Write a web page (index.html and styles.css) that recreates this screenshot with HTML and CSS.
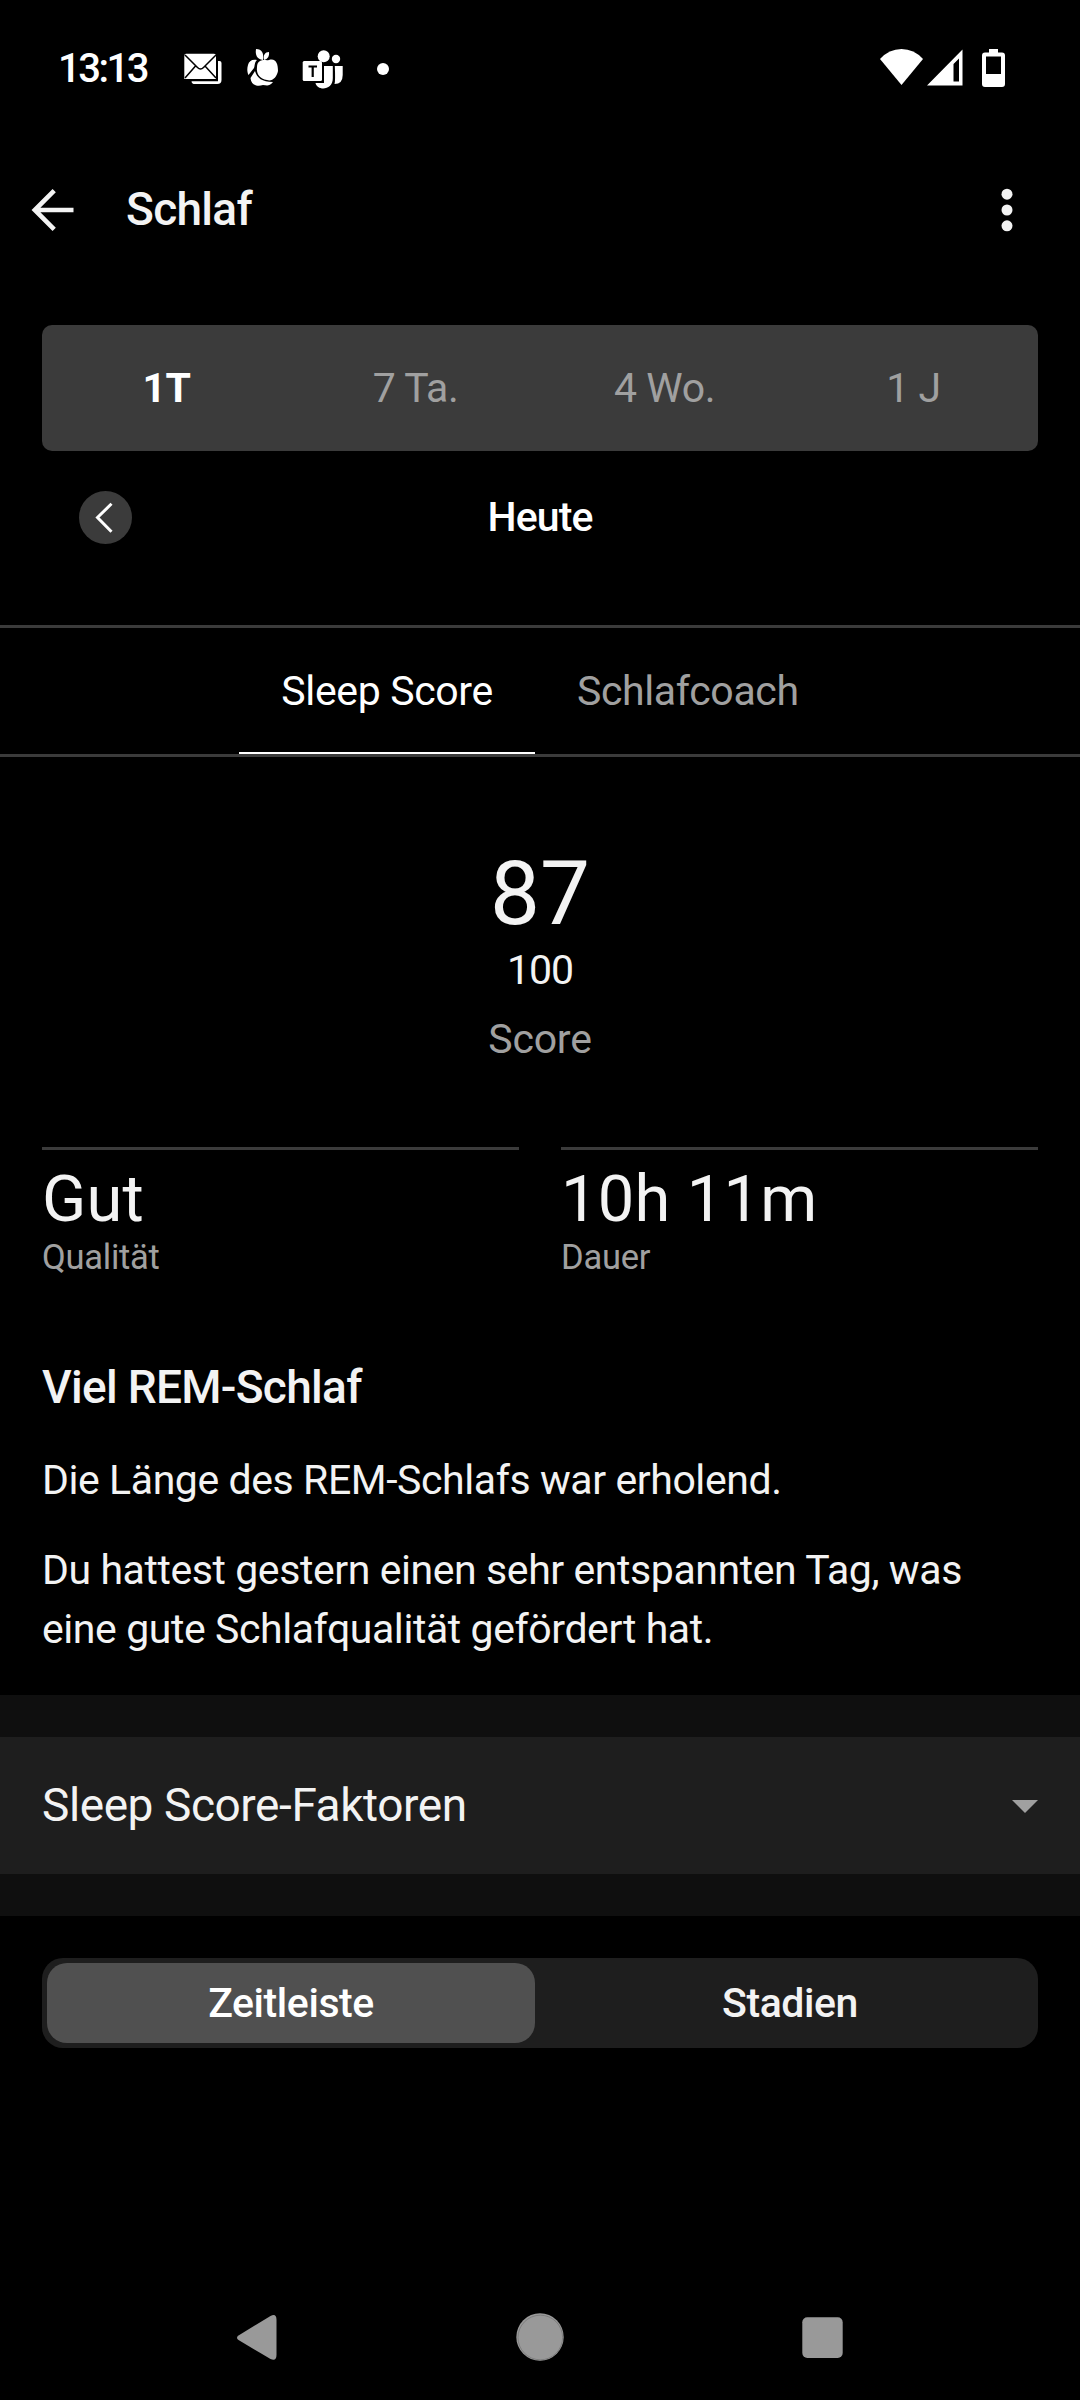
FILE: index.html
```html
<!DOCTYPE html>
<html lang="de">
<head>
<meta charset="utf-8">
<title>Schlaf</title>
<link rel="stylesheet" href="styles.css">
</head>
<body>
<div class="screen">
  <header class="status">
    <span class="clock">13:13</span>
    <svg class="notifications" width="210" height="50" viewBox="0 0 210 50" fill="#fff">
      <!-- mail -->
      <path d="M6 9.700H34Q36 9.700 36 12V35H4.300V12Q4.300 9.700 6 9.700Z"/>
      <path d="M5 11L17.500 23.500Q20.500 26.500 23.500 23.500L36 11M5 34L15.500 22M36 34L25 22" fill="none" stroke="#000" stroke-width="1.500"/>
      <path d="M38 17H39.500Q41.500 17 41.500 19V36Q41.500 40 37.500 40H13.500Q11.500 40 11.500 37.300H38Z"/>
      <!-- fruit -->
      <path d="M76 5C82 5 84 9 83 16C77 15 75 11 76 5ZM84 16C83 11 85 8 89 8C89.500 12 88 15 84 16Z"/>
      <path d="M80 17C84 15 86 17 89 16C96 14 98 20 98 27C97 33 92 38 87 36C80 35 76 30 77 23C77 20 78 18 80 17Z"/>
      <path d="M68 21C69 17 72 15 77 16C74 19 75 22 74 24L68.500 31C67 28 67 24 68 21Z"/>
      <path d="M75 27C77 34 82 38 93 38C89 43 86 41 83 41C77 43 71 41 70.500 34Z"/>
      <!-- teams -->
      <circle cx="143.700" cy="12.200" r="6"/><circle cx="156" cy="15" r="4.200"/>
      <path d="M144 22H152.800V34C153 47 137 47 135.500 39H144Z"/>
      <path d="M154.800 22H162.700V31Q162.700 40 154.500 40Q155.500 37 154.800 22Z"/>
      <rect x="122.700" y="17" width="19.300" height="20" rx="1.500"/>
      <path d="M128.500 22.500H137M132.700 22.500V33" stroke="#000" stroke-width="2.200"/>
      <circle cx="203" cy="25" r="6"/>
    </svg>
    <svg class="signals" width="130" height="42" viewBox="0 0 130 42" fill="#fff">
      <path d="M0 11Q9 1 21.500 1T43 11L21.500 37Z"/>
      <path fill-rule="evenodd" d="M82.500 1.500V37.500H47ZM79 10.500L73.500 16V33.500H79Z"/>
      <path fill-rule="evenodd" d="M109 1H118V4.500H122Q125 4.500 125 7.500V36Q125 39 122 39H105Q102 39 102 36V7.500Q102 4.500 105 4.500H109ZM106 8.500V26H121V8.500Z"/>
    </svg>
  </header>

  <div class="appbar">
    <svg width="44" height="44" viewBox="0 0 44 44" fill="none" stroke="#f3f3f3" stroke-width="4.600"><path d="M43.500 22H5M24.200 2.600L4.800 22L24.200 41.400"/></svg>
    <h1 class="title">Schlaf</h1>
    <svg class="more" width="12" height="44" viewBox="0 0 12 44" fill="#f3f3f3"><circle cx="6" cy="6.200" r="5.500"/><circle cx="6" cy="22" r="5.500"/><circle cx="6" cy="37.800" r="5.500"/></svg>
  </div>

  <nav class="periods">
    <span class="period active">1T</span><span class="period">7 Ta.</span><span class="period">4 Wo.</span><span class="period">1 J</span>
  </nav>

  <div class="day">
    <svg width="53" height="53" viewBox="0 0 53 53"><circle cx="26.500" cy="26.500" r="26.500" fill="#3b3b3b"/><path d="M32.500 12.800L18.500 26.500L32.500 40.800" fill="none" stroke="#fff" stroke-width="3"/></svg>
    <span class="today">Heute</span>
  </div>

  <nav class="tabs">
    <span class="tab selected">Sleep Score</span><span class="tab">Schlafcoach</span>
  </nav>

  <section class="score">
    <div class="value">87</div>
    <div class="max">100</div>
    <div class="label">Score</div>
  </section>

  <section class="stats">
    <div class="stat"><div class="big">Gut</div><div class="small">Qualität</div></div>
    <div class="stat"><div class="big">10h 11m</div><div class="small">Dauer</div></div>
  </section>

  <section class="insight">
    <h2 class="headline">Viel REM-Schlaf</h2>
    <p class="text">Die Länge des REM-Schlafs war erholend.</p>
    <p class="text">Du hattest gestern einen sehr entspannten Tag, was<br>eine gute Schlafqualität gefördert hat.</p>
  </section>

  <section class="factors">
    <div class="factor-row">
      <span class="factor-name">Sleep Score-Faktoren</span>
      <svg width="26" height="14" viewBox="0 0 26 14"><path d="M0 1H26L13 14Z" fill="#a0a0a0"/></svg>
    </div>
  </section>

  <div class="toggle"><span class="option chosen">Zeitleiste</span><span class="option">Stadien</span></div>

  <footer class="system">
    <svg width="42" height="48" viewBox="0 0 42 48"><path d="M34.500 3L2.500 22.500Q-0.500 24.500 2.500 27L34.500 46Q40.500 48.500 40.500 42V7Q40.500 0 34.500 3Z" fill="#999"/></svg>
    <svg width="48" height="48" viewBox="0 0 48 48"><circle cx="24" cy="24" r="23.700" fill="#999"/><circle cx="24.300" cy="24.500" r="22.300" fill="none" stroke="#777" stroke-width=".8"/></svg>
    <svg width="41" height="48" viewBox="0 0 41 48"><rect x=".3" y="4.300" width="40.400" height="40.600" rx="5" fill="#999"/></svg>
  </footer>
</div>
</body>
</html>
```
FILE: styles.css
```css
* { box-sizing: border-box; margin: 0; padding: 0; }
body { background: #000; }
svg { display: block; flex: none; }
.screen {
  width: 1080px; height: 2400px; overflow: hidden;
  display: flex; flex-direction: column;
  background: #000; color: #f3f3f3;
  font: 400 41px/50px Roboto, sans-serif;
  letter-spacing: -0.42px;
}
.status { display: flex; height: 136px; padding: 0 39px 0 58px; }
.clock { width: 122px; padding-top: 44px; font-size: 40px; font-weight: 500; color: #fff; letter-spacing: -2.5px; white-space: nowrap; }
.notifications { margin-top: 44px; }
.signals { margin: 48px 0 0 490px; }
.appbar { display: flex; align-items: center; height: 147px; padding: 0 67.500px 0 30px; }
.title { margin: 0 0 2px 52px; font-size: 46px; font-weight: 500; line-height: 54px; letter-spacing: -0.7px; }
.more { margin-left: auto; }
.periods { display: flex; height: 126px; margin: 42px 42px 0; border-radius: 10px; background: #3b3b3b; }
.period { flex: 1; text-align: center; line-height: 127px; color: #a0a0a0; }
.period.active { color: #fff; font-weight: 700; }
.day { display: grid; grid-template-columns: 1fr auto 1fr; align-items: center; height: 53px; margin: 40px 79px 0; }
.today { padding-bottom: 2px; font-weight: 500; letter-spacing: -0.9px; color: #fff; }
.tabs { display: flex; justify-content: center; height: 132px; margin-top: 81px; border-top: 3px solid #3b3b3b; border-bottom: 3px solid #3b3b3b; }
.tab { padding: 0 42px; line-height: 127px; letter-spacing: -0.35px; color: #a0a0a0; }
.tab.selected { border-bottom: 2px solid #fff; color: #fff; }
.score { display: flex; flex-direction: column; align-items: center; margin-top: 87px; }
.value { height: 100px; font-size: 89px; line-height: 100px; letter-spacing: 0; }
.max { height: 50px; margin-top: 1px; letter-spacing: -1px; }
.label { margin-top: 19px; letter-spacing: -0.2px; color: #a0a0a0; }
.stats { display: grid; grid-template-columns: 1fr 1fr; gap: 42px; margin: 83px 42px 0; }
.stat { border-top: 3px solid #3b3b3b; }
.big { height: 85px; font-size: 65px; line-height: 98px; letter-spacing: 0.2px; }
.small { height: 44px; font-size: 34.5px; line-height: 44px; letter-spacing: -0.25px; color: #a0a0a0; }
.insight { height: 416px; padding: 80px 42px 0; }
.headline { padding-bottom: 5px; font-size: 46px; font-weight: 500; line-height: 56px; letter-spacing: -0.7px; }
.text { margin-top: 31px; line-height: 59px; }
.factors { padding: 42px 0; background: #0f0f0f; }
.factor-row { display: flex; align-items: center; justify-content: space-between; height: 137px; padding: 0 42px; background: #1e1e1e; font-size: 46px; }
.factor-name { padding-bottom: 2px; }
.toggle { display: flex; gap: 12px; height: 90px; margin: 42px 42px 0; padding: 5px; border-radius: 21px; background: #1e1e1e; font-weight: 500; }
.option { flex: 1; border-radius: 20px; line-height: 80px; text-align: center; }
.option.chosen { flex: 0 0 488px; background: #505050; color: #fff; }
.system { display: flex; justify-content: space-between; margin-top: 265px; padding: 0 237px 0 236px; }
```
